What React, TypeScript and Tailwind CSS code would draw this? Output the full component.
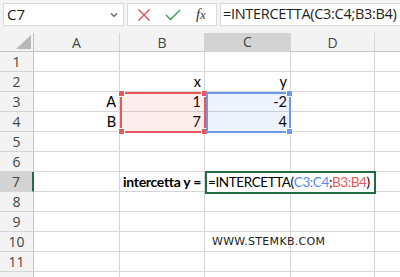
import React from "react";

const COLS = [
  { w: 34 },
  { w: 86, l: "A" },
  { w: 85, l: "B" },
  { w: 86, l: "C" },
  { w: 84, l: "D" },
  { w: 40, l: "" },
];

const cellFont = { fontFamily: "Lato, 'Open Sans', sans-serif" };

type CellContent = { text?: React.ReactNode; bold?: boolean };

const data: Record<string, CellContent> = {
  "2-2": { text: "x" },
  "2-3": { text: "y" },
  "3-1": { text: "A" },
  "3-2": { text: "1" },
  "3-3": { text: "-2" },
  "4-1": { text: "B" },
  "4-2": { text: "7" },
  "4-3": { text: "4" },
  "7-2": { text: "intercetta y =", bold: true },
};

export default function App() {
  const rows = Array.from({ length: 12 }, (_, i) => i + 1);
  return (
    <div className="w-[400px] h-[277px] overflow-hidden bg-white relative" style={{ fontFamily: "'Open Sans', sans-serif" }}>
      {/* Formula bar */}
      <div className="h-[33px] bg-[#f3f3f3] flex items-start pt-[3px]">
        <div className="ml-[3px] w-[121px] h-[23px] bg-white border border-[#dcdcdc] flex items-center justify-between px-[3px]">
          <span className="text-[15px] text-[#222] leading-none">C7</span>
          <svg width="8" height="6" viewBox="0 0 8 6" className="mr-[2px]">
            <path d="M1 1.5 L4 4.5 L7 1.5" stroke="#555" strokeWidth="1.1" fill="none" />
          </svg>
        </div>
        <div className="ml-[3px] w-[90px] h-[23px] bg-white border border-[#dcdcdc] flex items-center">
          <svg width="14" height="14" viewBox="0 0 14 14" className="ml-[9px]">
            <path d="M1.5 1.5 L12.5 12.5 M12.5 1.5 L1.5 12.5" stroke="#e0474c" strokeWidth="1.2" fill="none" />
          </svg>
          <svg width="16" height="12" viewBox="0 0 16 12" className="ml-[14px]">
            <path d="M1 6 L5.5 10.5 L15 1" stroke="#2e9a4a" strokeWidth="1.3" fill="none" />
          </svg>
          <span className="ml-[15px] text-[15px] italic text-[#333] leading-none" style={{ fontFamily: "'Liberation Serif', serif" }}>
            f<span className="text-[12px]">x</span>
          </span>
        </div>
        <div className="ml-[3px] flex-1 h-[23px] bg-white border border-[#dcdcdc] border-r-0 flex items-center pl-[2px]">
          <span className="text-[14.5px] tracking-[-0.3px] text-[#222] leading-none whitespace-nowrap">=INTERCETTA(C3:C4;B3:B4)</span>
        </div>
      </div>

      {/* Grid */}
      <div className="relative">
        {/* Header row */}
        <div className="flex h-[19px] bg-[#f3f3f3] border-b border-[#c6c6c6]">
          {COLS.map((c, i) => (
            <div
              key={i}
              className={`shrink-0 relative flex items-center justify-center text-[14px] text-[#444] ${
                i === 3 ? "bg-[#d3d3d3] border-b-2 border-[#1e6e42] -mb-px" : ""
              } ${i === 0 ? "border-r border-[#c6c6c6]" : "border-r border-[#d6d6d6]"}`}
              style={{ width: c.w }}
            >
              {i === 0 ? (
                <svg width="15" height="14" viewBox="0 0 15 14" className="absolute right-[2px] bottom-[2px]">
                  <path d="M15 0 L15 14 L0 14 Z" fill="#b8b8b8" />
                </svg>
              ) : (
                c.l
              )}
            </div>
          ))}
        </div>
        {rows.map((r) => (
          <div key={r} className="flex h-[20px]">
            {COLS.map((c, i) => {
              if (i === 0) {
                return (
                  <div
                    key={i}
                    className={`shrink-0 flex items-center justify-center text-[14px] text-[#444] border-b border-[#d6d6d6] ${
                      r === 7 ? "bg-[#d3d3d3] border-r-2 border-r-[#1e6e42]" : "bg-[#f3f3f3] border-r border-r-[#c6c6c6]"
                    }`}
                    style={{ width: c.w }}
                  >
                    {r}
                  </div>
                );
              }
              const d = data[`${r}-${i}`];
              return (
                <div
                  key={i}
                  className={`shrink-0 border-r border-b border-[#d6d6d6] flex items-end justify-end pr-[3px] pb-[1px] text-[14.5px] text-black leading-[17px] whitespace-nowrap ${
                    d?.bold ? "font-bold text-[14px] tracking-[-0.3px]" : ""
                  }`}
                  style={{ width: c.w, ...cellFont }}
                >
                  {d?.text}
                </div>
              );
            })}
          </div>
        ))}

        {/* Red range B3:B4 */}
        <div className="absolute left-[120px] top-[59px] w-[86px] h-[41px] bg-[#e8585a]/10 border-2 border-[#e8585a]">
          <div className="absolute -left-[3px] -top-[3px] w-[5px] h-[5px] bg-[#e8585a] outline outline-1 outline-white" />
          <div className="absolute -right-[3px] -top-[3px] w-[5px] h-[5px] bg-[#e8585a] outline outline-1 outline-white" />
          <div className="absolute -left-[3px] -bottom-[3px] w-[5px] h-[5px] bg-[#e8585a] outline outline-1 outline-white" />
          <div className="absolute -right-[3px] -bottom-[3px] w-[5px] h-[5px] bg-[#e8585a] outline outline-1 outline-white" />
        </div>
        {/* Blue range C3:C4 */}
        <div className="absolute left-[206px] top-[59px] w-[85px] h-[41px] bg-[#5b8de8]/10 border-2 border-[#6b98e8]">
          <div className="absolute -right-[3px] -top-[3px] w-[5px] h-[5px] bg-[#6b98e8] outline outline-1 outline-white" />
          <div className="absolute -right-[3px] -bottom-[3px] w-[5px] h-[5px] bg-[#6b98e8] outline outline-1 outline-white" />
        </div>

        {/* Editing cell C7 */}
        <div
          className="absolute left-[205px] top-[138px] w-[171px] h-[23px] bg-white border-2 border-[#1e6e42] flex items-center pl-[1px] text-[13.5px] tracking-[-0.4px] text-black whitespace-nowrap leading-none"
          style={cellFont}
        >
          =INTERCETTA(<span className="text-[#5b8de8]">C3:C4</span>;<span className="text-[#e8585a]">B3:B4</span>)
        </div>

        {/* Watermark */}
        <div
          className="absolute left-[212px] top-[201px] text-[11px] tracking-[0.3px] text-[#222]"
          style={{ fontFamily: "'DejaVu Sans', sans-serif" }}
        >
          WWW.STEMKB.COM
        </div>
      </div>
    </div>
  );
}
